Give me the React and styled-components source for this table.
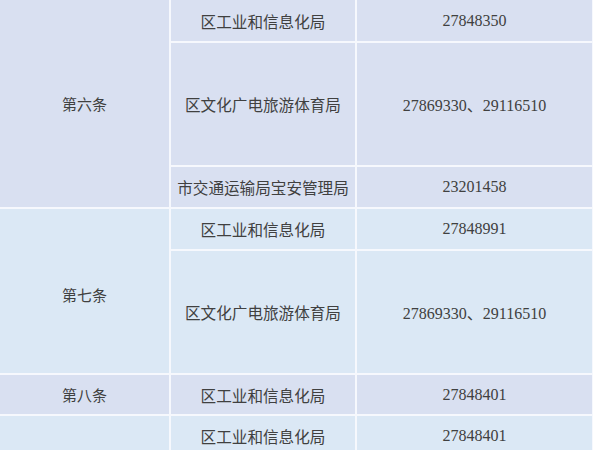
import React from 'react';
import styled, { createGlobalStyle } from 'styled-components';

const GlobalStyle = createGlobalStyle`
    html, body {
        margin: 0;
        padding: 0;
        background: #f6f8fd;
        overflow: hidden;
    }
`;

const tones = {
    lavender: '#d9e0f1',
    blue: '#dbe8f5',
};

const Table = styled.div`
    width: 593px;
    display: grid;
    grid-template-columns: 169px 184px 235px;
    grid-template-rows: 41px 122px 40px 40px 122px 39px 40px 40px;
    column-gap: 2px;
    row-gap: 2px;
    padding-right: 1px;
    box-sizing: border-box;
    background: #f6f8fd;
    font-family: "Liberation Serif", "Noto Sans CJK SC", serif;
    color: #404040;
`;

const Cell = styled.div`
    display: flex;
    align-items: center;
    justify-content: center;
    background: ${(p) => tones[p.tone]};
    font-size: 16px;
    white-space: nowrap;
`;

const GroupCell = styled(Cell)`
    grid-row: span ${(p) => p.span};
    font-family: "Noto Sans CJK SC", sans-serif;
    font-size: 15px;
    font-weight: 400;
    padding-top: ${(p) => p.nudge || 0}px;
`;

const Dept = styled(Cell)`
    font-family: "Noto Sans CJK SC", sans-serif;
    font-size: 15.6px;
    font-weight: 400;
`;

const Phone = styled(Cell)`
    font-size: 16px;
`;

const groups = [
    {
        label: '第六条',
        tone: 'lavender',
        rows: [
            ['区工业和信息化局', '27848350'],
            ['区文化广电旅游体育局', '27869330、29116510'],
            ['市交通运输局宝安管理局', '23201458'],
        ],
    },
    {
        label: '第七条',
        tone: 'blue',
        nudge: 6,
        rows: [
            ['区工业和信息化局', '27848991'],
            ['区文化广电旅游体育局', '27869330、29116510'],
        ],
    },
    {
        label: '第八条',
        tone: 'lavender',
        rows: [['区工业和信息化局', '27848401']],
    },
    {
        label: '第九条',
        tone: 'blue',
        rows: [
            ['区工业和信息化局', '27848401'],
            ['区工业和信息化局', '27848401'],
        ],
    },
];

export default function App() {
    return (
        <>
            <GlobalStyle />
            <Table>
                {groups.map((g) => (
                    <React.Fragment key={g.label}>
                        <GroupCell tone={g.tone} span={g.rows.length} nudge={g.nudge}>
                            {g.label}
                        </GroupCell>
                        {g.rows.map(([dept, phone], i) => (
                            <React.Fragment key={i}>
                                <Dept tone={g.tone}>{dept}</Dept>
                                <Phone tone={g.tone}>{phone}</Phone>
                            </React.Fragment>
                        ))}
                    </React.Fragment>
                ))}
            </Table>
        </>
    );
}
